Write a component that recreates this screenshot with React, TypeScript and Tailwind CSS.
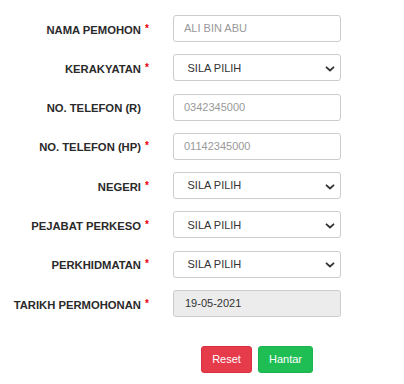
import React from "react";

const font = { fontFamily: '"Liberation Sans", Arial, Helvetica, sans-serif' };

function Chevron() {
  return (
    <svg width="10" height="6" viewBox="0 0 10 6" className="absolute right-[5px] top-[10.5px]">
      <path d="M1.5 1.3 L5 4.5 L8.5 1.3" fill="none" stroke="#333" strokeWidth="1.8" strokeLinecap="round" strokeLinejoin="round" />
    </svg>
  );
}

type Row = {
  label: string;
  req: boolean;
  kind: "text" | "select" | "date";
  value: string;
};

const rows: Row[] = [
  { label: "NAMA PEMOHON", req: true, kind: "text", value: "ALI BIN ABU" },
  { label: "KERAKYATAN", req: true, kind: "select", value: "SILA PILIH" },
  { label: "NO. TELEFON (R)", req: false, kind: "text", value: "0342345000" },
  { label: "NO. TELEFON (HP)", req: true, kind: "text", value: "01142345000" },
  { label: "NEGERI", req: true, kind: "select", value: "SILA PILIH" },
  { label: "PEJABAT PERKESO", req: true, kind: "select", value: "SILA PILIH" },
  { label: "PERKHIDMATAN", req: true, kind: "select", value: "SILA PILIH" },
  { label: "TARIKH PERMOHONAN", req: true, kind: "date", value: "19-05-2021" },
];

export default function App() {
  return (
    <div className="w-[404px] h-[384px] bg-white pt-[15px]" style={font}>
      <div className="flex flex-col gap-[12.3px]">
        {rows.map((r) => (
          <div key={r.label} className="flex items-center h-[27px]">
            <div className="w-[141px] text-right">
              <span className="relative text-[11.25px] font-bold text-[#2a2a2a] leading-none">
                {r.label}
                {r.req && (
                  <span className="absolute left-full top-[0px] ml-[4px] text-[10px] text-[#e8000b]">*</span>
                )}
              </span>
            </div>
            <div className="ml-[32px] w-[168px] h-[27px]">
              {r.kind === "text" && (
                <div className="h-full rounded-[3px] border border-[#cccccc] bg-white flex items-center pl-[10px] text-[11px] text-[#999]">
                  {r.value}
                </div>
              )}
              {r.kind === "select" && (
                <div className="relative h-full rounded-[3px] border border-[#cccccc] bg-white flex items-center pl-[13.5px] text-[11px] text-[#333]">
                  {r.value}
                  <Chevron />
                </div>
              )}
              {r.kind === "date" && (
                <div className="h-full rounded-[3px] border border-[#cccccc] bg-[#ececec] flex items-center pl-[11px] text-[11px] text-[#333]">
                  {r.value}
                </div>
              )}
            </div>
          </div>
        ))}
      </div>
      <div className="flex gap-[6px] pl-[201px] mt-[28.5px]">
        <button className="w-[51px] h-[27px] rounded-[3px] bg-[#e63b4b] border border-[#d9303f] text-white text-[11px]">
          Reset
        </button>
        <button className="w-[55px] h-[27px] rounded-[3px] bg-[#1fbe55] border border-[#1bb24f] text-white text-[11px]">
          Hantar
        </button>
      </div>
    </div>
  );
}
